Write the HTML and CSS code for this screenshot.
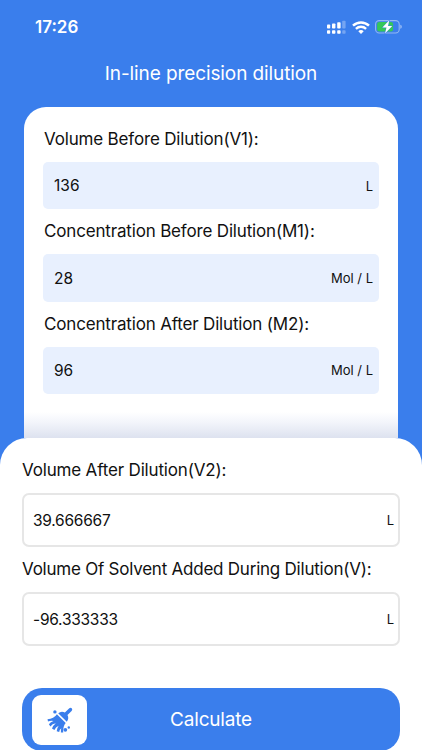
FILE: index.html
```html
<!DOCTYPE html>
<html lang="en">
<head>
    <meta charset="UTF-8">
    <meta name="viewport" content="width=device-width, initial-scale=1.0">
    <title>In-line precision dilution</title>
    <link rel="stylesheet" href="styles.css">
</head>
<body>
    <div class="status-bar">
        <span class="time">17:26</span>
        <div class="status-icons">
            <svg class="signal" width="19" height="14" viewBox="0 0 19 14" fill="#fff">
                <rect x="0" y="4.5" width="3.2" height="4" rx="0.8"/>
                <rect x="5" y="3.5" width="3.4" height="5" rx="0.8"/>
                <rect x="10.2" y="2.3" width="3.4" height="6.2" rx="0.8"/>
                <rect x="15.2" y="0.8" width="3.4" height="7.7" rx="0.8" opacity="0.3"/>
                <rect x="0" y="10.2" width="3.2" height="3.6" rx="0.8"/>
                <rect x="5" y="10.2" width="3.4" height="3.6" rx="0.8"/>
                <rect x="10.2" y="10.2" width="3.4" height="3.6" rx="0.8"/>
                <rect x="15.2" y="10.2" width="3.4" height="3.6" rx="0.8" opacity="0.3"/>
            </svg>
            <svg class="wifi" width="18" height="13" viewBox="0 0 18 13" fill="none" stroke="#fff">
                <path d="M1 4.7C5.6 .3 12.4 .3 17 4.7" stroke-width="2.5"/>
                <path d="M3.9 7.8C6.8 5.1 11.2 5.1 14.1 7.8" stroke-width="2.4"/>
                <path d="M6.3 10.2C7.9 8.7 10.1 8.7 11.7 10.2L9 12.9Z" fill="#fff" stroke="none"/>
            </svg>
            <svg class="battery" width="27" height="16" viewBox="0 0 27 16">
                <rect x="0.6" y="1.6" width="23.6" height="12.4" rx="3.6" fill="none" stroke="#fff" stroke-opacity="0.45" stroke-width="1.1"/>
                <rect x="2.1" y="3.1" width="16" height="9.4" rx="2.2" fill="#35c759"/>
                <path d="M25.3 5.8C27.3 6.5 27.3 9.1 25.3 9.8Z" fill="#fff" fill-opacity="0.5"/>
                <path d="M14.3 1.2L7.4 8.6H11.5L10 14.6L17.2 6.9H13Z" fill="#fff" stroke="#3a7eec" stroke-width="0.8" paint-order="stroke"/>
            </svg>
        </div>
    </div>

    <h1 class="title">In-line precision dilution</h1>

    <div class="card">
        <div class="label">Volume Before Dilution(V1):</div>
        <div class="field"><span class="value">136</span><span class="unit">L</span></div>
        <div class="label">Concentration Before Dilution(M1):</div>
        <div class="field"><span class="value">28</span><span class="unit">Mol / L</span></div>
        <div class="label">Concentration After Dilution (M2):</div>
        <div class="field"><span class="value">96</span><span class="unit">Mol / L</span></div>
    </div>

    <div class="sheet">
        <div class="label">Volume After Dilution(V2):</div>
        <div class="result"><span class="value">39.666667</span><span class="unit">L</span></div>
        <div class="label label-long">Volume Of Solvent Added During Dilution(V):</div>
        <div class="result"><span class="value">-96.333333</span><span class="unit">L</span></div>
        <div class="actions">
            <div class="clear">
                <svg width="26" height="26" viewBox="0 0 26 26" fill="#3a7eec">
                    <path d="M22.3 1.2Q23.9 .3 24.9 1.5Q25.8 2.8 24.6 4L20.5 8.1Q22.3 11.8 19.8 14.7L11.2 6.3Q14.2 3.7 17.9 5.5Z"/>
                    <path d="M9.9 7.3L18.7 15.9Q15.8 19.2 16.2 25.5L13.9 25.5Q13.6 23.4 14.3 21.2Q12.2 22.7 12.2 25.1L9.7 24.2Q9.7 21.3 11.7 18.7Q8.5 20 7.4 23L5 21.5Q5.9 18.5 8.8 16.2Q5.3 16.7 3.4 19.4L1.9 17.3Q3.6 14.9 6.5 13.9Q3.6 13.4 1 14.5L.5 12.2Q6.9 11.9 9.9 7.3Z"/>
                    <circle cx="7.9" cy="4.9" r="1.7"/>
                    <circle cx="18.3" cy="22.8" r="1.9"/>
                    <circle cx="21.8" cy="20.5" r="1.2"/>
                </svg>
            </div>
            <span class="calculate">Calculate</span>
        </div>
    </div>
</body>
</html>
```
FILE: styles.css
```css
* {
    box-sizing: border-box;
}
body {
    margin: 0;
    height: 750px;
    overflow: hidden;
    display: flex;
    flex-direction: column;
    background-color: #3a7eec;
    color: #111;
    font-family: Inter, "Liberation Sans", sans-serif;
}
.status-bar {
    display: flex;
    flex-shrink: 0;
    justify-content: space-between;
    align-items: center;
    height: 54px;
    padding: 0 20px 0 35px;
    color: #fff;
}
.time {
    font-size: 17px;
    font-weight: 600;
}
.status-icons {
    display: flex;
    align-items: center;
}
.wifi {
    margin-left: 6px;
}
.battery {
    margin-left: 5px;
}
.title {
    flex-shrink: 0;
    margin: 0;
    height: 53px;
    padding-top: 8px;
    line-height: 24px;
    text-align: center;
    font-size: 19px;
    font-weight: 400;
    letter-spacing: -0.1px;
    color: #fff;
}
.card {
    height: 331px;
    flex-shrink: 0;
    margin: 0 24px;
    padding: 10px 19px 0;
    border-radius: 22px 22px 0 0;
    background: linear-gradient(#fff 305px, #f3f5fb 315px, #dde2ef 331px);
}
.label {
    height: 45px;
    line-height: 44px;
    font-size: 17px;
    letter-spacing: -0.17px;
    white-space: nowrap;
}
.card .label {
    padding-left: 1px;
}
.label-long {
    letter-spacing: -0.23px;
}
.field {
    display: flex;
    align-items: center;
    justify-content: space-between;
    height: 47.4px;
    padding: 0 6px 0 11px;
    border-radius: 5px;
    background-color: #e8f0fe;
}
.value {
    font-size: 15.5px;
}
.unit {
    font-size: 13px;
}
.sheet {
    flex: 1;
    padding: 10px 22px 0;
    background: #fff;
    border-radius: 27px 27px 0 0;
}
.result {
    display: flex;
    align-items: center;
    justify-content: space-between;
    height: 54px;
    padding: 0 4px 0 9px;
    border: 2px solid #e6e6e6;
    border-radius: 7px;
}
.result .value {
    letter-spacing: -0.25px;
}
.actions {
    display: flex;
    align-items: center;
    height: 63px;
    margin-top: 42px;
    padding-left: 10px;
    border-radius: 20px;
    background-color: #3a7eec;
    color: #fff;
}
.clear {
    display: flex;
    align-items: center;
    justify-content: center;
    width: 55px;
    height: 50px;
    border-radius: 9px;
    background: #fff;
}
.calculate {
    flex: 1;
    padding-right: 65px;
    text-align: center;
    font-size: 19px;
    letter-spacing: -0.2px;
}
```
